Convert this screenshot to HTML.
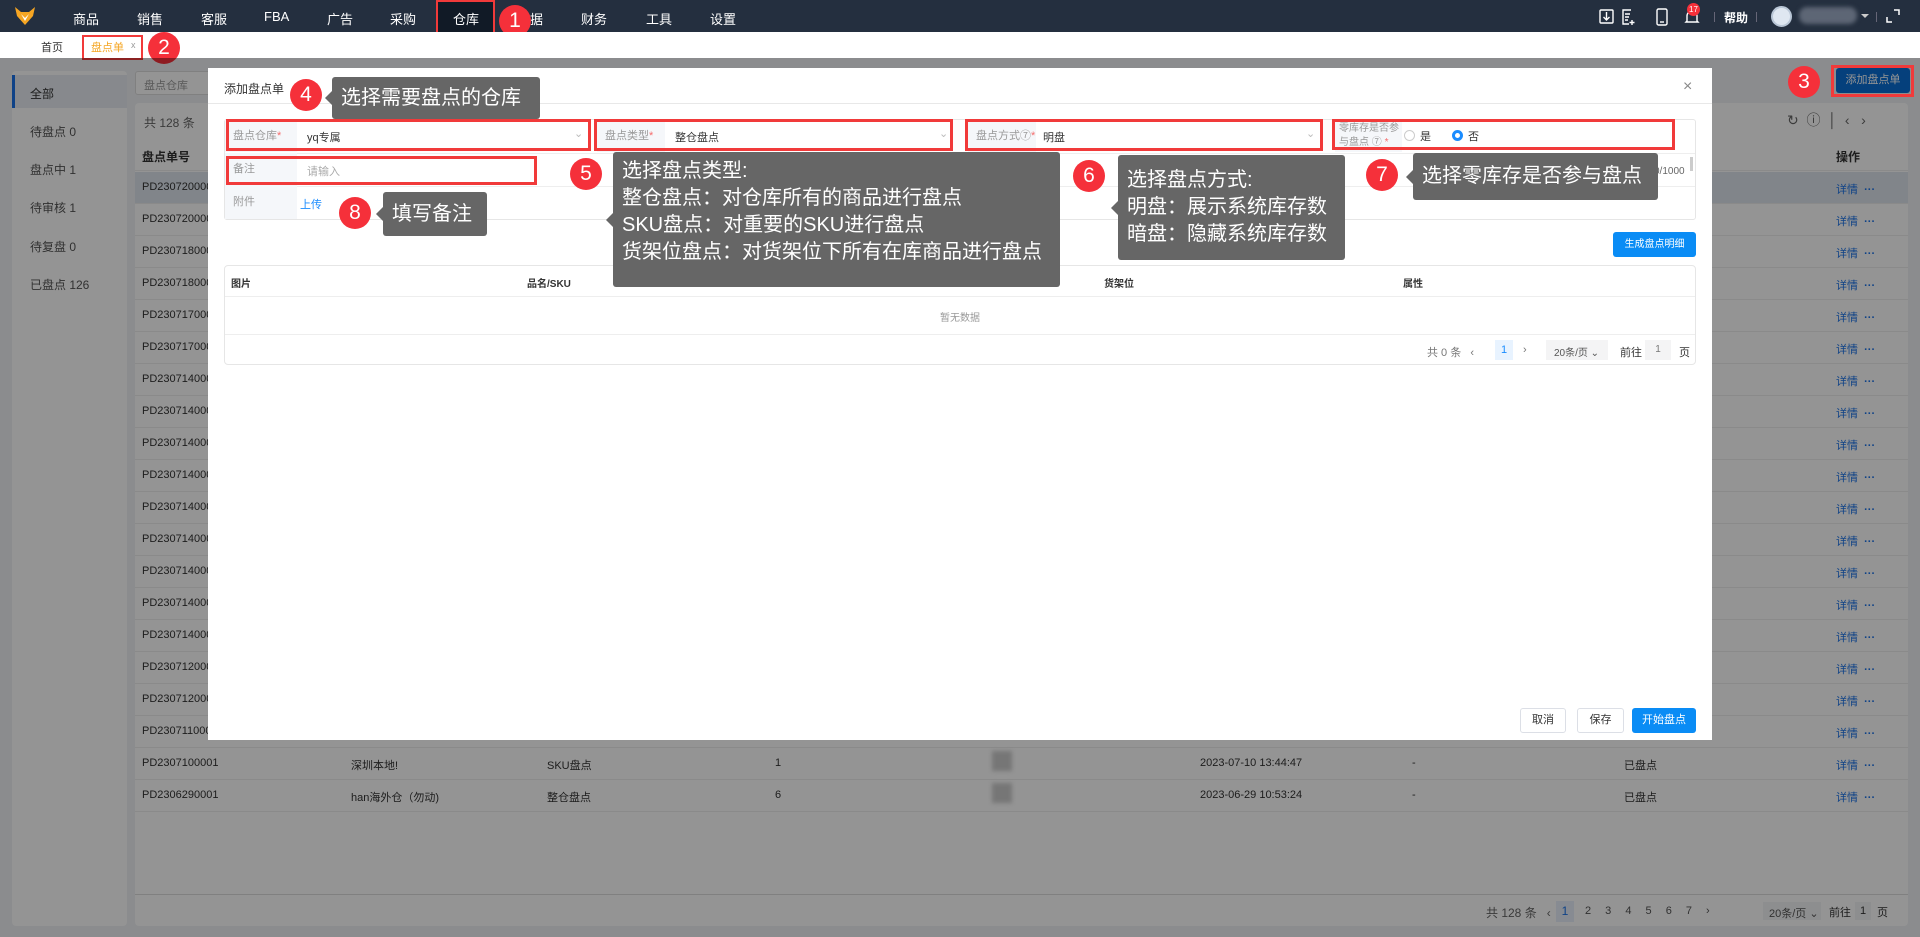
<!DOCTYPE html>
<html><head><meta charset="utf-8"><style>
*{box-sizing:border-box;margin:0;padding:0}
body{width:1920px;height:937px;position:relative;overflow:hidden;background:#f0f2f5;font-family:"Liberation Sans","Noto Sans CJK SC",sans-serif;font-size:12px;color:#333}
.a{position:absolute;white-space:nowrap}
.top{left:0;top:0;width:1920px;height:32px;background:#242f3f}
.nav{color:#fff;font-size:13px;top:9px}
.tabs{left:0;top:32px;width:1920px;height:26px;background:#fff}
.panel{background:#fff;border-radius:4px}
.ov{left:0;top:58px;width:1920px;height:879px;background:rgba(0,0,0,0.42)}
.modal{left:208px;top:68px;width:1504px;height:672px;background:#fff}
.circ{width:32px;height:32px;border-radius:50%;background:#f5303a;color:#fff;font-size:21px;text-align:center;line-height:32px;position:absolute}
.tip{position:absolute;background:#666;color:#fff;font-size:20px;border-radius:3px;padding:0 9px;line-height:27px}
.tip:before{content:"";position:absolute;left:-7px;top:50%;margin-top:-7px;border:7px solid transparent;border-left:0;border-right-color:#666}
.rb{position:absolute;border:3px solid #f13a3a}
.lab{position:absolute;background:#f5f7fa;color:#999;font-size:11px;padding-left:8px}
.row{color:#333;font-size:11px}
.btn{position:absolute;border:1px solid #dcdfe6;border-radius:3px;background:#fff;text-align:center;font-size:11px;color:#333}
.sb{color:#333;font-size:12px;left:30px}
</style></head><body>
<div class="a top"></div>
<svg class="a" style="left:14px;top:6px" width="22" height="20" viewBox="0 0 22 20"><path d="M1 1 L7 6 L15 6 L21 1 L19 10 L11 19 L3 10Z" fill="#f6a623"/><path d="M7 8 L11 12 L15 8 L11 15Z" fill="#fff"/></svg>
<div class="a nav" style="left:73px">商品</div>
<div class="a nav" style="left:137px">销售</div>
<div class="a nav" style="left:201px">客服</div>
<div class="a nav" style="left:264px">FBA</div>
<div class="a nav" style="left:327px">广告</div>
<div class="a nav" style="left:390px">采购</div>
<div class="a" style="left:436px;top:0;width:59px;height:34px;background:#111a26;border:2px solid #f13a3a"></div>
<div class="a nav" style="left:453px">仓库</div>
<div class="a nav" style="left:517px">数据</div>
<div class="a nav" style="left:581px">财务</div>
<div class="a nav" style="left:646px">工具</div>
<div class="a nav" style="left:710px">设置</div>
<div class="circ" style="left:499px;top:5px">1</div>
<svg class="a" style="left:1598px;top:8px" width="110" height="18" viewBox="0 0 110 18" fill="none" stroke="#fff" stroke-width="1.4"><rect x="2" y="2" width="13" height="13" rx="1"/><path d="M8.5 4v8M5.5 9l3 3 3-3"/><path d="M33 2h-8v14h6M27 6h5M27 9h4M27 12h3M34 12v5M31.5 14.5h5"/><rect x="59" y="1" width="10" height="16" rx="1.5"/><path d="M62 14h4"/><path d="M89 13V8a5 5 0 0 1 10 0v5l1 1H88z"/></svg>
<div class="a" style="left:1687px;top:3px;width:13px;height:13px;border-radius:50%;background:#f5303a;color:#fff;font-size:8px;text-align:center;line-height:13px">17</div>
<div class="a" style="left:1714px;top:12px;width:1px;height:10px;background:#667"></div>
<div class="a" style="left:1724px;top:9px;color:#fff;font-size:12px;font-weight:bold">帮助</div>
<div class="a" style="left:1756px;top:12px;width:1px;height:10px;background:#667"></div>
<div class="a" style="left:1771px;top:6px;width:21px;height:21px;border-radius:50%;background:#dfe7f1;border:2px solid #b9c6d6"></div>
<div class="a" style="left:1799px;top:7px;width:58px;height:17px;border-radius:8px;background:#5d6675;filter:blur(2px)"></div>
<div class="a" style="left:1861px;top:14px;border:4px solid transparent;border-top-color:#ccc"></div>
<div class="a" style="left:1876px;top:12px;width:1px;height:10px;background:#667"></div>
<svg class="a" style="left:1886px;top:9px" width="14" height="14" viewBox="0 0 14 14" fill="none" stroke="#fff" stroke-width="1.5"><path d="M8 1h5v5M6 13H1V8"/></svg>

<div class="a tabs"></div>
<div class="a" style="left:41px;top:39px;font-size:11px;color:#333">首页</div>
<div class="a" style="left:91px;top:39px;font-size:11px;color:#f5a623">盘点单</div>
<div class="a" style="left:131px;top:40px;font-size:9px;color:#999">x</div>
<div class="a" style="left:82px;top:35px;width:61px;height:25px;border:2px solid #f13a3a"></div>
<div class="circ" style="left:148px;top:32px">2</div>

<!-- background -->
<div class="a panel" style="left:12px;top:71px;width:115px;height:855px"></div>
<div class="a" style="left:12px;top:75px;width:115px;height:33px;background:#e8edf3;border-left:3px solid #1a73e8"></div>
<div class="a sb" style="top:85px">全部</div>
<div class="a sb" style="top:123px;color:#555">待盘点 0</div>
<div class="a sb" style="top:161px;color:#555">盘点中 1</div>
<div class="a sb" style="top:199px;color:#555">待审核 1</div>
<div class="a sb" style="top:238px;color:#555">待复盘 0</div>
<div class="a sb" style="top:276px;color:#555">已盘点 126</div>
<div class="a" style="left:135px;top:71px;width:120px;height:24px;background:#fff;border:1px solid #ddd;border-radius:3px;padding:5px 8px;color:#999;font-size:11px">盘点仓库</div>
<div class="a" style="left:1836px;top:68px;width:74px;height:25px;background:#0a6fd6;border-radius:3px;color:#fff;font-size:11px;text-align:center;line-height:25px">添加盘点单</div>
<div class="a panel" style="left:135px;top:103px;width:1773px;height:823px"></div>
<div class="a" style="left:144px;top:114px;color:#666;font-size:12px">共 128 条</div>
<div class="a" style="left:1787px;top:110px;color:#666;font-size:14px">↻ &nbsp;ⓘ &nbsp;│ &nbsp;‹ &nbsp; ›</div>
<div class="a" style="left:135px;top:139px;width:1773px;height:32px;border-bottom:1px solid #eee"></div>
<div class="a" style="left:142px;top:148px;font-weight:bold;font-size:12px">盘点单号</div>
<div class="a" style="left:1836px;top:148px;font-weight:bold;font-size:12px">操作</div>
<div class="a" style="left:135px;top:172px;width:1773px;height:32px;background:#dfe6ee"></div>
<div id="rows"></div>
<div class="a" style="left:135px;top:894px;width:1773px;height:1px;background:#ddd"></div>
<div class="a" style="left:1486px;top:904px;color:#666;font-size:12px">共 128 条 &nbsp; ‹ </div>
<div class="a" style="left:1556px;top:901px;width:18px;height:21px;background:#e8f0fb;color:#1a73e8;text-align:center;line-height:21px">1</div>
<div class="a" style="left:1585px;top:905px;color:#555;font-size:11px;word-spacing:11px">2 3 4 5 6 7 ›</div>
<div class="a" style="left:1763px;top:902px;width:58px;height:18px;background:#f3f4f6;color:#555;font-size:11px;padding:3px 6px">20条/页 ⌄</div>
<div class="a" style="left:1829px;top:904px;font-size:11px">前往</div>
<div class="a" style="left:1855px;top:902px;width:16px;height:18px;background:#f3f4f6;text-align:center;font-size:11px;line-height:18px">1</div>
<div class="a" style="left:1877px;top:904px;font-size:11px">页</div>

<div class="a ov"></div>

<div class="a" style="left:1831px;top:65px;width:83px;height:32px;border:3px solid #f13a3a"></div>
<div class="circ" style="left:1788px;top:66px">3</div>

<div class="a modal">
  <div class="a" style="left:16px;top:12px;font-size:12px;color:#333">添加盘点单</div>
  <div class="a" style="left:1475px;top:10px;font-size:16px;color:#888">×</div>
  <div class="a" style="left:0;top:35px;width:1504px;height:1px;background:#e8e8e8"></div>
  <div class="a" style="left:16px;top:51px;width:1472px;height:101px;border:1px solid #e6e6e6;border-radius:3px"></div>
  <div class="a" style="left:17px;top:85px;width:1470px;height:1px;background:#eee"></div>
  <div class="a" style="left:17px;top:118px;width:1470px;height:1px;background:#eee"></div>
</div>
<div class="lab" style="left:225px;top:120px;width:72px;height:32px;line-height:32px">盘点仓库<span style="color:#f56c6c">*</span></div>
<div class="a" style="left:307px;top:129px;font-size:11px">yq专属</div>
<div class="a" style="left:574px;top:127px;color:#bbb;font-size:11px">⌄</div>
<div class="lab" style="left:597px;top:120px;width:68px;height:32px;line-height:32px">盘点类型<span style="color:#f56c6c">*</span></div>
<div class="a" style="left:675px;top:129px;font-size:11px">整仓盘点</div>
<div class="a" style="left:939px;top:127px;color:#bbb;font-size:11px">⌄</div>
<div class="lab" style="left:968px;top:120px;width:68px;height:32px;line-height:32px">盘点方式⑦<span style="color:#f56c6c">*</span></div>
<div class="a" style="left:1043px;top:129px;font-size:11px">明盘</div>
<div class="a" style="left:1306px;top:127px;color:#bbb;font-size:11px">⌄</div>
<div class="lab" style="left:1335px;top:120px;width:67px;height:32px;line-height:14px;padding-top:2px;padding-left:4px;font-size:10px">零库存是否参<br>与盘点 ⑦ <span style="color:#f56c6c">*</span></div>
<div class="a" style="left:1404px;top:130px;width:11px;height:11px;border:1px solid #ccc;border-radius:50%"></div>
<div class="a" style="left:1420px;top:128px;font-size:11px">是</div>
<div class="a" style="left:1452px;top:130px;width:11px;height:11px;border:3px solid #1a8cff;border-radius:50%"></div>
<div class="a" style="left:1468px;top:128px;font-size:11px">否</div>
<div class="lab" style="left:225px;top:153px;width:72px;height:33px;line-height:33px">备注</div>
<div class="a" style="left:307px;top:163px;font-size:11px;color:#aaa">请输入</div>
<div class="a" style="left:1654px;top:166px;font-size:10px;color:#666">0/1000</div>
<div class="a" style="left:1690px;top:157px;width:3px;height:14px;background:#ccc"></div>
<div class="lab" style="left:225px;top:186px;width:72px;height:33px;line-height:33px">附件</div>
<div class="a" style="left:300px;top:196px;font-size:11px;color:#1a8cff">上传</div>

<div class="rb" style="left:226px;top:119px;width:365px;height:32px"></div>
<div class="rb" style="left:594px;top:119px;width:359px;height:32px"></div>
<div class="rb" style="left:965px;top:119px;width:358px;height:32px"></div>
<div class="rb" style="left:1332px;top:119px;width:343px;height:31px"></div>
<div class="rb" style="left:226px;top:156px;width:311px;height:29px"></div>

<div class="a" style="left:1613px;top:232px;width:83px;height:25px;background:#0a8cf5;border-radius:3px;color:#fff;font-size:10px;text-align:center;line-height:25px">生成盘点明细</div>
<div class="a" style="left:224px;top:265px;width:1472px;height:100px;border:1px solid #e6e6e6;border-radius:4px"></div>
<div class="a" style="left:225px;top:296px;width:1470px;height:1px;background:#eee"></div>
<div class="a" style="left:225px;top:334px;width:1470px;height:1px;background:#eee"></div>
<div class="a" style="left:231px;top:275px;font-size:10px;font-weight:bold">图片</div>
<div class="a" style="left:527px;top:275px;font-size:10px;font-weight:bold">品名/SKU</div>
<div class="a" style="left:810px;top:275px;font-size:10px;font-weight:bold">FNSKU</div>
<div class="a" style="left:1104px;top:275px;font-size:10px;font-weight:bold">货架位</div>
<div class="a" style="left:1403px;top:275px;font-size:10px;font-weight:bold">属性</div>
<div class="a" style="left:940px;top:309px;font-size:10px;color:#999">暂无数据</div>
<div class="a" style="left:1427px;top:344px;font-size:11px;color:#777">共 0 条 &nbsp; ‹</div>
<div class="a" style="left:1495px;top:340px;width:18px;height:20px;background:#e8f3ff;color:#1a8cff;text-align:center;line-height:20px;font-size:11px">1</div>
<div class="a" style="left:1523px;top:344px;font-size:11px;color:#777">›</div>
<div class="a" style="left:1546px;top:340px;width:62px;height:20px;background:#f4f4f5;font-size:10px;color:#555;padding:4px 8px">20条/页 ⌄</div>
<div class="a" style="left:1620px;top:344px;font-size:11px">前往</div>
<div class="a" style="left:1645px;top:340px;width:26px;height:20px;background:#f4f4f5;font-size:10px;color:#777;text-align:center;line-height:20px">1</div>
<div class="a" style="left:1679px;top:344px;font-size:11px">页</div>

<div class="btn" style="left:1520px;top:708px;width:46px;height:25px;line-height:23px">取消</div>
<div class="btn" style="left:1577px;top:708px;width:47px;height:25px;line-height:23px">保存</div>
<div class="btn" style="left:1632px;top:708px;width:64px;height:25px;line-height:25px;background:#0a8cf5;border:none;color:#fff">开始盘点</div>

<div class="circ" style="left:290px;top:79px">4</div>
<div class="tip" style="left:332px;top:77px;width:208px;height:42px;line-height:42px">选择需要盘点的仓库</div>
<div class="circ" style="left:570px;top:158px">5</div>
<div class="tip" style="left:613px;top:152px;width:447px;height:135px;padding-top:6px">选择盘点类型:<br>整仓盘点：对仓库所有的商品进行盘点<br>SKU盘点：对重要的SKU进行盘点<br>货架位盘点：对货架位下所有在库商品进行盘点</div>
<div class="circ" style="left:1073px;top:160px">6</div>
<div class="tip" style="left:1118px;top:155px;width:227px;height:105px;padding-top:12px">选择盘点方式:<br>明盘：展示系统库存数<br>暗盘：隐藏系统库存数</div>
<div class="circ" style="left:1366px;top:159px">7</div>
<div class="tip" style="left:1413px;top:153px;width:245px;height:47px;line-height:47px">选择零库存是否参与盘点</div>
<div class="circ" style="left:339px;top:197px">8</div>
<div class="tip" style="left:383px;top:192px;width:104px;height:44px;line-height:44px">填写备注</div>

<script>
var ids=["PD2307200004","PD2307200001","PD2307180002","PD2307180001","PD2307170002","PD2307170001","PD2307140009","PD2307140008","PD2307140007","PD2307140006","PD2307140005","PD2307140004","PD2307140003","PD2307140002","PD2307140001","PD2307120003","PD2307120002","PD2307110002","PD2307100001","PD2306290001"];
var h="";
for(var i=0;i<ids.length;i++){var y=181+i*32;
h+='<div class="a row" style="left:142px;top:'+y+'px">'+ids[i]+'</div>';
h+='<div class="a" style="left:135px;top:'+(y+22)+'px;width:1773px;height:1px;background:#eee"></div>';
h+='<div class="a" style="left:1836px;top:'+y+'px;font-size:11px;color:#1a73e8">详情 &nbsp;<b>···</b></div>';}
var ex=[[18,"深圳本地!","SKU盘点","1","2023-07-10 13:44:47"],[19,"han海外仓（勿动)","整仓盘点","6","2023-06-29 10:53:24"]];
ex.forEach(function(r){var y=181+r[0]*32;
h+='<div class="a row" style="left:351px;top:'+y+'px">'+r[1]+'</div><div class="a row" style="left:547px;top:'+y+'px">'+r[2]+'</div><div class="a row" style="left:775px;top:'+y+'px">'+r[3]+'</div><div class="a" style="left:992px;top:'+(y-6)+'px;width:20px;height:20px;background:#ccc;filter:blur(2px)"></div><div class="a row" style="left:1200px;top:'+y+'px">'+r[4]+'</div><div class="a row" style="left:1412px;top:'+y+'px">-</div><div class="a row" style="left:1624px;top:'+y+'px">已盘点</div>';});
document.getElementById("rows").outerHTML=h;
</script>
</body></html>
